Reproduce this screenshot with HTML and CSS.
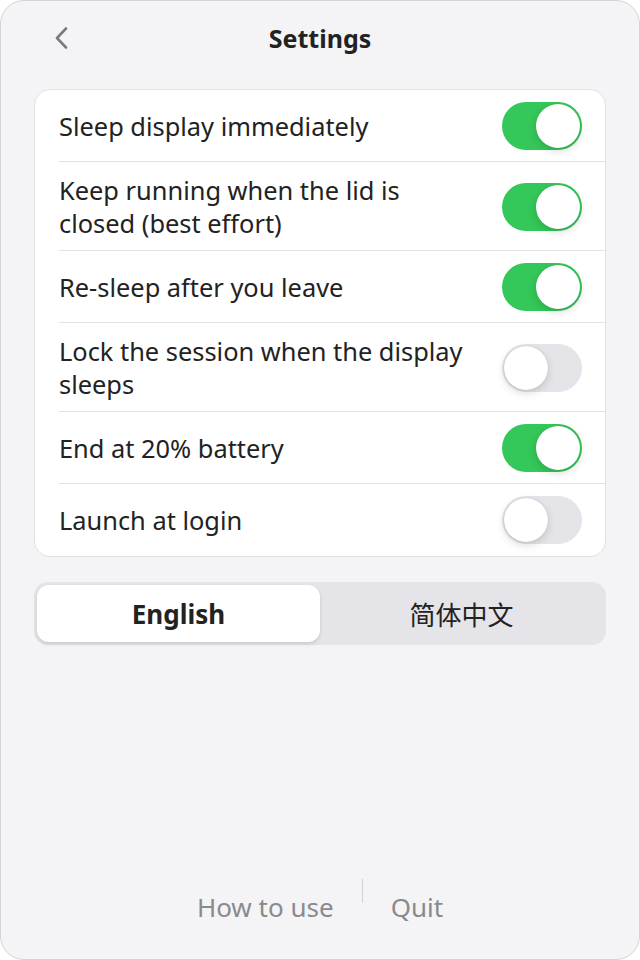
FILE: index.html
```html
<!DOCTYPE html>
<html lang="en">
<head>
    <meta charset="UTF-8">
    <meta name="viewport" content="width=device-width, initial-scale=1.0">
    <title>Settings</title>
    <link rel="stylesheet" href="styles.css">
</head>
<body>
    <div class="window">
        <header class="topbar">
            <button class="back" aria-label="Back">
                <svg width="14" height="22" viewBox="0 0 14 22">
                    <path d="M12 1.5 L3 11 L12 20.5" fill="none" stroke="#7c7c80" stroke-width="2.6" stroke-linecap="round" stroke-linejoin="round"/>
                </svg>
            </button>
            <h1>Settings</h1>
            <span></span>
        </header>

        <div class="card">
            <div class="row">
                <span class="label">Sleep display immediately</span>
                <span class="switch on"><span class="knob"></span></span>
            </div>
            <div class="row">
                <span class="label">Keep running when the lid is closed (best effort)</span>
                <span class="switch on"><span class="knob"></span></span>
            </div>
            <div class="row">
                <span class="label">Re-sleep after you leave</span>
                <span class="switch on"><span class="knob"></span></span>
            </div>
            <div class="row">
                <span class="label">Lock the session when the display sleeps</span>
                <span class="switch"><span class="knob"></span></span>
            </div>
            <div class="row">
                <span class="label">End at 20% battery</span>
                <span class="switch on"><span class="knob"></span></span>
            </div>
            <div class="row">
                <span class="label">Launch at login</span>
                <span class="switch"><span class="knob"></span></span>
            </div>
        </div>

        <div class="segmented">
            <button class="seg active">English</button>
            <button class="seg">简体中文</button>
        </div>

        <footer class="footer">
            <button class="link">How to use</button>
            <span class="divider"></span>
            <button class="link">Quit</button>
        </footer>
    </div>
</body>
</html>
```

FILE: styles.css
```css
* {
    box-sizing: border-box;
}
body {
    margin: 0;
    background: #fff;
    font-family: "Noto Sans", "Noto Sans CJK SC", sans-serif;
    color: #222;
}
button {
    font: inherit;
    color: inherit;
    background: none;
    border: none;
    padding: 0;
    cursor: pointer;
}
.window {
    width: 640px;
    height: 960px;
    border: 1px solid #d4d4d8;
    border-radius: 24px;
    background: #f4f4f6;
    padding: 0 33px;
    display: flex;
    flex-direction: column;
}

/* top bar */
.topbar {
    height: 74px;
    display: grid;
    grid-template-columns: 1fr auto 1fr;
    align-items: center;
}
.back {
    justify-self: start;
    width: 40px;
    height: 40px;
    margin-left: 7px;
    display: flex;
    align-items: center;
    justify-content: center;
}
h1 {
    margin: 0;
    font-size: 25px;
    font-weight: 700;
    color: #222;
}

/* settings list */
.card {
    margin-top: 14px;
    background: #fff;
    border: 1px solid #e2e2e6;
    border-radius: 16px;
}
.row {
    display: flex;
    align-items: center;
    justify-content: space-between;
    gap: 24px;
    padding: 12px 23px 12px 24px;
    position: relative;
}
.row:not(:last-child)::after {
    content: "";
    position: absolute;
    bottom: 0;
    left: 24px;
    right: 0;
    height: 1px;
    background: #e3e3e6;
}
.label {
    font-size: 25.4px;
    line-height: 32.5px;
    color: #222;
    max-width: 412px;
}
.switch {
    flex: none;
    width: 80px;
    height: 48px;
    border-radius: 24px;
    background: #e4e4e9;
    position: relative;
}
.switch.on {
    background: #34c759;
}
.knob {
    position: absolute;
    top: 2px;
    left: 2px;
    width: 44px;
    height: 44px;
    border-radius: 50%;
    background: #fff;
    box-shadow: 0 3px 8px rgba(0, 0, 0, 0.15), 0 0 1px rgba(0, 0, 0, 0.2);
}
.switch.on .knob {
    left: 34px;
}

/* language picker */
.segmented {
    margin-top: 25px;
    background: #e4e4e9;
    border-radius: 14px;
    padding: 3px;
    display: grid;
    grid-template-columns: 1fr 1fr;
}
.seg {
    height: 57px;
    border-radius: 12px;
    font-size: 26px;
    color: #222;
}
.seg.active {
    background: #fff;
    font-weight: 700;
    box-shadow: 0 2px 4px rgba(0, 0, 0, 0.12);
}

/* bottom links */
.footer {
    margin-top: auto;
    padding-bottom: 23px;
    display: flex;
    justify-content: center;
    gap: 28px;
}
.link {
    padding: 12px 0;
    font-size: 26px;
    line-height: 33px;
    color: #8a8a8e;
}
.divider {
    width: 1px;
    height: 24px;
    background: #d2d2d6;
}
```
